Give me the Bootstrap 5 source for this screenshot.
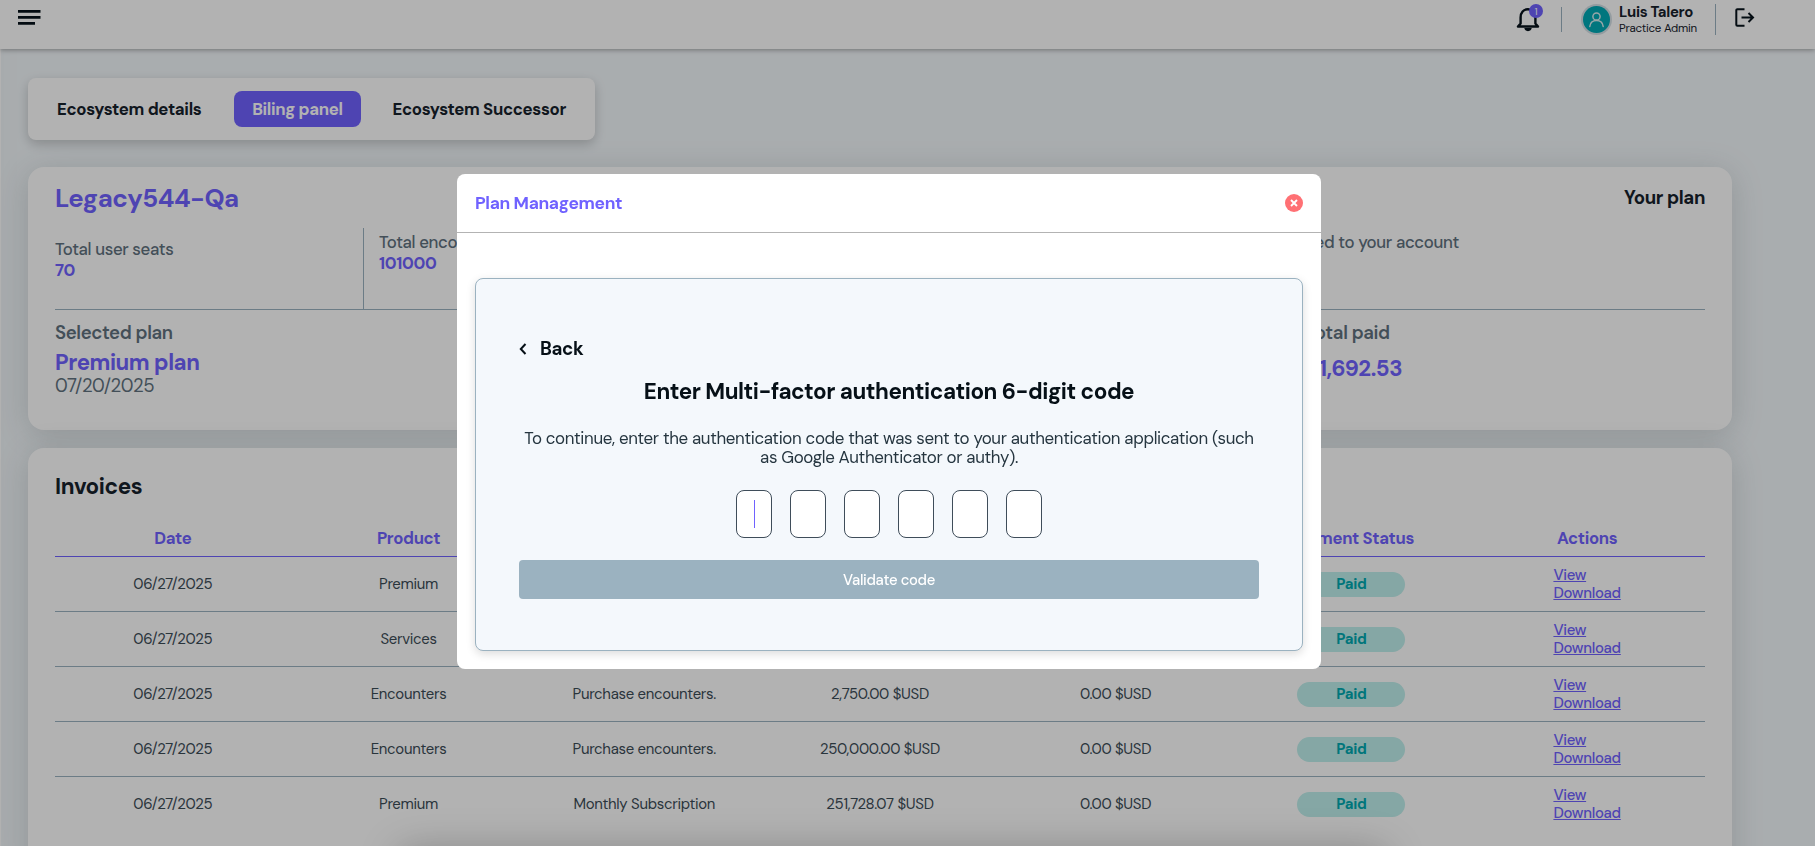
<!DOCTYPE html>
<html lang="en">
<head>
<meta charset="utf-8">
<meta name="viewport" content="width=device-width, initial-scale=1">
<title>Biling panel</title>
<link href="https://cdn.jsdelivr.net/npm/bootstrap@5.3.0/dist/css/bootstrap.min.css" rel="stylesheet">
<style>
  :root { --violet: #7062ff; --slate: #9bb2c0; --ink: #16212b; --grey: #61727f; }
  * { letter-spacing: -.02em; }
  body { font-family: "DM Sans", Inter, "Liberation Sans", sans-serif; background: #f3f8fb; color: #3f4d58; height: 846px; overflow: hidden; }
  .violet { color: var(--violet); }
  .ink { color: var(--ink); }
  .f16 { font-size: 16.8px; line-height: 21px; }
  .f18 { font-size: 18.6px; line-height: 24px; }
  .topbar { height: 49px; position: relative; z-index: 3; padding: 0 60px 0 18px; box-shadow: 0 1px 5px rgba(0,0,0,.35); }
  .edge { width: 1px; height: 846px; background: #fff; box-shadow: 0 0 20px rgba(40,60,50,.28); z-index: 1; }
  .page-title { font-size: 24.6px; line-height: 30px; margin: -29px 0 0; height: 58px; }
  .rule { width: 1px; background: var(--slate); }
  .bell-count { font-size: 10px; width: 14px; height: 14px; background: var(--violet); right: -3px; top: -3px; }
  .avatar-ring { width: 31px; height: 31px; background: #d5e0e6; }
  .avatar-disc { width: 27px; height: 27px; background: #00a9b5; }
  .content-area { padding: 0 83px 0 28px; position: relative; z-index: 2; }
  .tabs-box { width: 567px; height: 62px; padding: 0 13px; border-radius: 8px; box-shadow: 0 4px 12px rgba(0,0,0,.2); margin-bottom: 27px; }
  .tabs-box .nav-link { height: 36px; padding: 0 16px; line-height: 36px; font-size: 16.8px; font-weight: 700; color: var(--ink); border-radius: 8px; white-space: nowrap; }
  .tabs-box .nav-link.active { background: var(--violet); color: #fff; width: 127px; text-align: center; padding: 0; margin-left: 1px; }
  .panel { border: 0; border-radius: 16px; padding: 0 27px; box-shadow: 0 5px 32px rgba(50,62,60,.18); }
  .plan-panel { height: 263px; padding-top: 17px; margin-bottom: 18px; }
  .org { font-size: 25.7px; line-height: 30px; }
  .stats { height: 82px; margin-top: 14px; border-bottom: 1px solid var(--slate); font-weight: 500; }
  .stats > .seats { width: 308px; padding-top: 11px; }
  .stats > .enc { padding: 4px 0 0 15px; border-left: 1px solid var(--slate); }
  .stats > .extra { padding: 4px 246px 0 0; }
  .big { font-size: 22.2px; line-height: 25px; }
  .paid-col { width: 400px; }
  .invoice-panel { height: 480px; padding-top: 24px; }
  .h21 { font-size: 22.4px; line-height: 30px; }
  .invoices { table-layout: fixed; margin-top: 18px; font-size: 14.95px; border-collapse: separate; border-spacing: 0; }
  .invoices thead th { height: 37px; padding: 0 0 1px; border-bottom: 1px solid var(--violet); color: var(--violet); font-size: 16.7px; line-height: 20px; font-weight: 700; vertical-align: middle; }
  .invoices tbody td { height: 55px; padding: 0; line-height: 18px; border-bottom: 1px solid var(--slate); color: #3c4c57; }
  .invoices tbody tr:last-child td { border-bottom-color: transparent; }
  .pill { width: 108px; height: 25px; line-height: 25px; background: #bfefec; color: #00a9b1; font-weight: 700; border-radius: 13px; }
  .links { vertical-align: middle; }
  .links a { color: var(--violet); display: block; font-weight: 500; text-underline-offset: 1px; }
  .below { height: 40px; left: 400px; right: 430px; bottom: -45px; box-shadow: 0 0 40px rgba(0,0,0,.27); z-index: 4; }
  .modal { padding-right: 37px; }
  .modal-backdrop { --bs-backdrop-opacity: .3; }
  .modal-dialog { width: 864px; max-width: 864px; margin: 174px auto 0; }
  .modal-content { border: 0; border-radius: 8px; }
  .modal-header { height: 59px; padding: 0 18px 7px; border-bottom: 1px solid #b3b3b3; }
  .modal-title { font-size: 17.4px; font-weight: 700; padding-top: 7px; }
  .modal-body { padding: 45px 18px 18px; }
  .close-x { margin-top: 7px; line-height: 0; }
  .mfa { height: 373px; border: 1px solid var(--slate); border-radius: 8px; background: #f4f8fc; padding: 58px 43px 0; box-shadow: 0 3px 10px rgba(0,0,0,.14); }
  .mfa-title { font-size: 22.4px; line-height: 26px; color: #061017; margin: 18px 0 24px; }
  .mfa-text { font-size: 16.9px; line-height: 19px; color: #263640; margin-bottom: 23px; }
  .digit { width: 36px; height: 48px; border: 1px solid #3f4d5a; border-radius: 8px; background: #fff; }
  .caret { width: 1px; height: 28px; background: var(--violet); }
  .validate { height: 39px; margin-top: 22px; padding: 1px 0 0; background: #9bb2c0; color: #fff; border: 0; border-radius: 4px; font-size: 14.8px; font-weight: 500; }
</style>
</head>
<body>
<header class="topbar bg-white d-flex align-items-start">
  <svg class="me-auto" style="margin-top:9px" width="24" height="17" fill="#06121a"><path d="M0 1h22.500v2.800H0zM0 7h22.500v2.800H0zM0 13h17v2.800H0z"/></svg>
  <div class="position-relative" style="margin:7px 21px 0 0">
    <svg class="d-block" width="24" height="25" viewBox="0 0 24 25" fill="none" stroke="#06121a" stroke-width="2.400" stroke-linejoin="round"><path d="M2 19.500h20l-2.600-3V10.500C19.400 5.500 16.500 2.200 12 2.200S4.600 5.500 4.600 10.500v6z"/><path d="M9 21c.3 1.800 1.300 2.400 3 2.400s2.700-.6 3-2.400" fill="#06121a" stroke-width="1.500"/></svg>
    <span class="bell-count position-absolute rounded-circle text-white d-flex align-items-center justify-content-center">1</span>
  </div>
  <div class="rule" style="height:25px;margin-top:7px"></div>
  <div class="avatar-ring rounded-circle d-flex align-items-center justify-content-center" style="margin:4px 7px 0 19px">
    <div class="avatar-disc rounded-circle d-flex align-items-center justify-content-center">
      <svg width="17" height="17" viewBox="0 0 17 17" fill="none" stroke="#d9eef0" stroke-width="1.500" stroke-linecap="round"><circle cx="8.500" cy="5.500" r="3.600"/><path d="M1.800 15.500c.4-3.600 3-6 6.700-6s6.300 2.400 6.700 6"/></svg>
    </div>
  </div>
  <div style="width:96px;padding-top:4px">
    <div class="ink fw-bold" style="font-size:14.900px;line-height:16px">Luis Talero</div>
    <div class="ink text-nowrap" style="font-size:11.500px;line-height:17px">Practice Admin</div>
  </div>
  <div class="rule" style="height:31px;margin:4px 19px 0 0"></div>
  <svg style="margin-top:8px" width="20" height="20" fill="none" stroke="#06121a" stroke-width="2"><path d="M9.500 1.200H2.300a1 1 0 0 0-1 1v14.600a1 1 0 0 0 1 1h7.200M6.500 9.500h11M13.500 5l4.500 4.500-4.500 4.500"/></svg>
</header>

<div class="edge position-absolute top-0 start-0"></div>

<main class="content-area">
  <h1 class="page-title fw-bold ink">Settings and plan</h1>

  <nav class="tabs-box nav bg-white flex-nowrap align-items-center justify-content-between">
    <a class="nav-link">Ecosystem details</a>
    <a class="nav-link active">Biling panel</a>
    <a class="nav-link">Ecosystem Successor</a>
  </nav>

  <section class="panel plan-panel card">
    <div class="d-flex justify-content-between">
      <h2 class="org violet fw-bold m-0">Legacy544-Qa</h2>
      <div class="f18 ink fw-bold" style="padding-top:2px">Your plan</div>
    </div>
    <div class="stats d-flex f16" style="color:var(--grey)">
      <div class="seats">Total user seats<div class="violet fw-bold">70</div></div>
      <div class="enc">Total encounters<div class="violet fw-bold">101000</div></div>
      <div class="extra ms-auto">Encounters assigned to your account</div>
    </div>
    <div class="d-flex justify-content-between" style="padding-top:11px;color:var(--grey)">
      <div>
        <div class="f18 fw-semibold">Selected plan</div>
        <div class="big violet fw-bold" style="margin-top:5px">Premium plan</div>
        <div class="f18" style="line-height:23px">07/20/2025</div>
      </div>
      <div class="paid-col">
        <div class="f18 fw-semibold" style="padding-left:1px">Total paid</div>
        <div class="big violet fw-bold" style="margin-top:11px;padding-left:1px">$1,692.53</div>
      </div>
    </div>
  </section>

  <section class="panel invoice-panel card">
    <h3 class="h21 ink fw-bold m-0">Invoices</h3>
    <table class="table table-borderless invoices text-center align-middle mb-0">
      <thead><tr><th>Date</th><th>Product</th><th></th><th></th><th></th><th>Payment Status</th><th>Actions</th></tr></thead>
      <tbody>
        <tr><td>06/27/2025</td><td>Premium</td><td></td><td></td><td></td><td><div class="pill mx-auto">Paid</div></td><td><div class="links d-inline-block text-start"><a href="#">View</a><a href="#">Download</a></div></td></tr>
        <tr><td>06/27/2025</td><td>Services</td><td></td><td></td><td></td><td><div class="pill mx-auto">Paid</div></td><td><div class="links d-inline-block text-start"><a href="#">View</a><a href="#">Download</a></div></td></tr>
        <tr><td>06/27/2025</td><td>Encounters</td><td>Purchase encounters.</td><td>2,750.00 $USD</td><td>0.00 $USD</td><td><div class="pill mx-auto">Paid</div></td><td><div class="links d-inline-block text-start"><a href="#">View</a><a href="#">Download</a></div></td></tr>
        <tr><td>06/27/2025</td><td>Encounters</td><td>Purchase encounters.</td><td>250,000.00 $USD</td><td>0.00 $USD</td><td><div class="pill mx-auto">Paid</div></td><td><div class="links d-inline-block text-start"><a href="#">View</a><a href="#">Download</a></div></td></tr>
        <tr><td>06/27/2025</td><td>Premium</td><td>Monthly Subscription</td><td>251,728.07 $USD</td><td>0.00 $USD</td><td><div class="pill mx-auto">Paid</div></td><td><div class="links d-inline-block text-start"><a href="#">View</a><a href="#">Download</a></div></td></tr>
      </tbody>
    </table>
  </section>
</main>

<div class="below position-fixed"></div>
<div class="modal-backdrop show"></div>

<div class="modal d-block" tabindex="-1" role="dialog">
  <div class="modal-dialog">
    <div class="modal-content">
      <div class="modal-header d-flex align-items-center justify-content-between">
        <h4 class="modal-title violet">Plan Management</h4>
        <span class="close-x" role="button"><svg width="18" height="18"><circle cx="9" cy="9" r="9" fill="#ff7074"/><path d="M6 6l6 6M12 6l-6 6" stroke="#fff" stroke-width="1.900"/></svg></span>
      </div>
      <div class="modal-body">
        <div class="mfa">
          <div class="d-flex align-items-center f18 fw-bold" style="color:#061017">
            <svg width="8" height="12" fill="none" stroke="#061017" stroke-width="2" style="margin-right:13px"><path d="M6.500 1L1.800 6l4.700 5"/></svg>Back
          </div>
          <h5 class="mfa-title fw-bold text-center">Enter Multi-factor authentication 6-digit code</h5>
          <p class="mfa-text text-center">To continue, enter the authentication code that was sent to your authentication application (such as Google Authenticator or authy).</p>
          <div class="d-flex justify-content-center" style="gap:18px">
            <div class="digit d-flex align-items-center justify-content-center"><span class="caret"></span></div>
            <div class="digit"></div><div class="digit"></div><div class="digit"></div><div class="digit"></div><div class="digit"></div>
          </div>
          <button class="btn validate w-100">Validate code</button>
        </div>
      </div>
    </div>
  </div>
</div>
<script src="https://cdn.jsdelivr.net/npm/bootstrap@5.3.0/dist/js/bootstrap.bundle.min.js"></script>
</body>
</html>
